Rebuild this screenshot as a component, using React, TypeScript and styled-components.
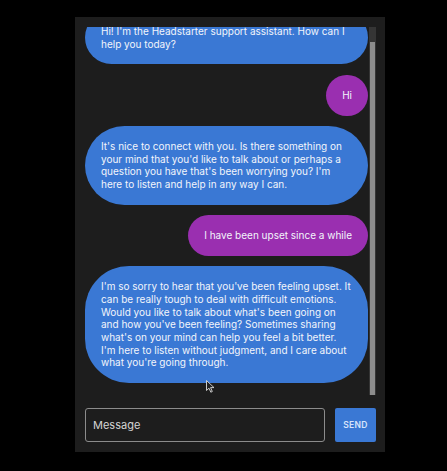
import * as React from 'react';
import styled, { createGlobalStyle } from 'styled-components';

type Role = 'assistant' | 'user';

type Message = {
  role: Role;
  content: string;
};

const messages: Message[] = [
  {
    role: 'assistant',
    content: "Hi! I'm the Headstarter support assistant. How can I help you today?",
  },
  { role: 'user', content: 'Hi' },
  {
    role: 'assistant',
    content:
      "It's nice to connect with you. Is there something on your mind that you'd like to talk about or perhaps a question you have that's been worrying you? I'm here to listen and help in any way I can.",
  },
  { role: 'user', content: 'I have been upset since a while' },
  {
    role: 'assistant',
    content:
      "I'm so sorry to hear that you've been feeling upset. It can be really tough to deal with difficult emotions. Would you like to talk about what's been going on and how you've been feeling? Sometimes sharing what's on your mind can help you feel a bit better. I'm here to listen without judgment, and I care about what you're going through.",
  },
];

const GlobalStyle = createGlobalStyle`
  html, body {
    margin: 0;
    background: #000;
    font-family: Inter, Roboto, "Liberation Sans", sans-serif;
  }
`;

const Page = styled.div`
  width: 447px;
  height: 471px;
  padding: 17px 0 0 75px;
  box-sizing: border-box;
  position: relative;
  overflow: hidden;
`;

const Panel = styled.div`
  width: 310px;
  height: 435px;
  box-sizing: border-box;
  background: #1d1d1d;
  padding: 10px 9px 10px 10px;
  display: flex;
  flex-direction: column;
  gap: 13px;
`;

const ChatArea = styled.div`
  flex: 1;
  min-height: 0;
  display: flex;
  gap: 1px;
`;

const MessageList = styled.div`
  flex: 1;
  min-width: 0;
  overflow-y: auto;
  scrollbar-width: none;
  display: flex;
  flex-direction: column;
  gap: 10.5px;
  padding-bottom: 11.5px;
  box-sizing: border-box;

  &::-webkit-scrollbar {
    display: none;
  }
`;

const ScrollTrack = styled.div`
  width: 7px;
  background: #353535;
  position: relative;
`;

const ScrollThumb = styled.div`
  position: absolute;
  left: 1px;
  right: 1px;
  background: #8c8c8c;
`;

const Row = styled.div<{ $role: Role }>`
  display: flex;
  flex-shrink: 0;
  justify-content: ${(p) => (p.$role === 'assistant' ? 'flex-start' : 'flex-end')};
`;

const Bubble = styled.div<{ $role: Role }>`
  background: ${(p) => (p.$role === 'assistant' ? '#3a78d4' : '#9a2fb0')};
  color: #f2f5fb;
  border-radius: 44px;
  padding: 14px 16px;
  font-size: 10px;
  line-height: 12.67px;
`;

const InputRow = styled.div`
  display: flex;
  gap: 10px;
  height: 34px;
  flex-shrink: 0;
`;

const MessageField = styled.div`
  flex: 1;
  box-sizing: border-box;
  border: 1.5px solid #8c8c8c;
  border-radius: 3px;
  display: flex;
  align-items: center;
  padding-left: 7px;
  color: #d4d4d4;
  font-size: 11px;
`;

const SendButton = styled.button`
  width: 41px;
  border: none;
  border-radius: 2px;
  background: #3a78d4;
  color: #d6e4fb;
  font-family: Inter, Roboto, "Liberation Sans", sans-serif;
  font-size: 8.5px;
  font-weight: 600;
  letter-spacing: 0.3px;
  padding: 0;
`;

const Cursor = styled.svg`
  position: absolute;
  left: 206px;
  top: 380px;
`;

export default function App() {
  const listRef = React.useRef<HTMLDivElement>(null);
  const [thumb, setThumb] = React.useState({ top: 0, height: 0 });

  const measure = () => {
    const el = listRef.current;
    if (!el) return;
    const ratio = el.clientHeight / el.scrollHeight;
    setThumb({
      top: (el.scrollTop / el.scrollHeight) * el.clientHeight,
      height: ratio * el.clientHeight,
    });
  };

  React.useLayoutEffect(() => {
    const el = listRef.current;
    if (el) el.scrollTop = el.scrollHeight;
    measure();
  }, []);

  return (
    <>
      <GlobalStyle />
      <Page>
        <Panel>
          <ChatArea>
            <MessageList ref={listRef} onScroll={measure}>
              {messages.map((m, i) => (
                <Row key={i} $role={m.role}>
                  <Bubble $role={m.role}>{m.content}</Bubble>
                </Row>
              ))}
            </MessageList>
            <ScrollTrack>
              <ScrollThumb style={{ top: thumb.top, height: thumb.height }} />
            </ScrollTrack>
          </ChatArea>
          <InputRow>
            <MessageField>Message</MessageField>
            <SendButton>SEND</SendButton>
          </InputRow>
        </Panel>
        <Cursor width="9" height="13" viewBox="0 0 9 13">
          <path d="M0.5 0.5 L0.5 10.5 L3 8.2 L4.8 12.2 L6.3 11.5 L4.6 7.6 L8 7.6 Z" fill="#222" stroke="#ddd" strokeWidth="0.9" />
        </Cursor>
      </Page>
    </>
  );
}
